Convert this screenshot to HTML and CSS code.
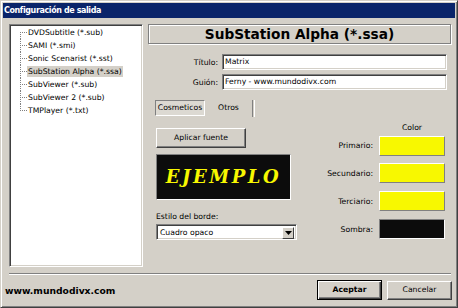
FILE: index.html
```html
<!DOCTYPE html>
<html lang="es">
<head>
  <meta charset="UTF-8">
  <title>Configuración de salida</title>
  <link rel="stylesheet" href="styles.css">
</head>
<body>
  <div class="window">
    <div class="titlebar">Configuración de salida</div>

    <div class="main">
      <div class="tree">
        <ul>
          <li><span>DVDSubtitle (*.sub)</span></li>
          <li><span>SAMI (*.smi)</span></li>
          <li><span>Sonic Scenarist (*.sst)</span></li>
          <li class="selected"><span>SubStation Alpha (*.ssa)</span></li>
          <li><span>SubViewer (*.sub)</span></li>
          <li><span>SubViewer 2 (*.sub)</span></li>
          <li><span>TMPlayer (*.txt)</span></li>
        </ul>
      </div>

      <div class="panel">
        <div class="heading">SubStation Alpha (*.ssa)</div>

        <div class="field">
          <label>Título:</label>
          <div class="input">Matrix</div>
        </div>
        <div class="field">
          <label>Guión:</label>
          <div class="input">Ferny - www.mundodivx.com</div>
        </div>

        <div class="tabs">
          <span class="tab active">Cosmeticos</span>
          <span class="tab">Otros</span>
          <span class="tab-sep"></span>
        </div>

        <div class="cosmetic">
          <div class="font-col">
            <div class="btn apply">Aplicar fuente</div>
            <div class="sample">EJEMPLO</div>
            <div class="caption">Estilo del borde:</div>
            <div class="select">
              <span class="select-text">Cuadro opaco</span>
              <span class="arrow">
                <svg width="7" height="4" viewBox="0 0 7 4"><path d="M0 0h7L3.5 4z" fill="#000"/></svg>
              </span>
            </div>
          </div>

          <div class="color-col">
            <div class="color-head">Color</div>
            <span class="color-label">Primario:</span><span class="swatch yellow"></span>
            <span class="color-label">Secundario:</span><span class="swatch yellow"></span>
            <span class="color-label">Terciario:</span><span class="swatch yellow"></span>
            <span class="color-label">Sombra:</span><span class="swatch black"></span>
          </div>
        </div>
      </div>
    </div>

    <div class="separator"></div>

    <div class="footer">
      <span class="site">www.mundodivx.com</span>
      <div class="btn default">Aceptar</div>
      <div class="btn">Cancelar</div>
    </div>
  </div>
</body>
</html>
```

FILE: styles.css
```css
body {
  margin: 0;
  background: #d4d0c8;
  font-family: "DejaVu Sans", sans-serif;
  font-size: 7.7px;
  color: #000;
}
.window {
  width: 458px;
  height: 308px;
  box-sizing: border-box;
  border: 1px solid;
  border-color: #d4d0c8 #404040 #404040 #d4d0c8;
  box-shadow: inset 1px 1px #fff, inset -1px -1px #808080;
  padding: 2px;
  background: #d4d0c8;
  display: flex;
  flex-direction: column;
}
.titlebar {
  height: 15px;
  line-height: 15px;
  padding-left: 1px;
  background: #0a246a;
  color: #fff;
  font-weight: bold;
  font-size: 8px;
  letter-spacing: -0.4px;
}
.main {
  display: flex;
  gap: 5px;
  padding: 6px 4px 0 6px;
}

/* tree */
.tree {
  width: 134px;
  height: 243px;
  box-sizing: border-box;
  background: #fff;
  border: 1px solid;
  border-color: #808080 #fff #fff #808080;
  box-shadow: inset 1px 1px #404040, inset -1px -1px #d4d0c8;
}
.tree ul {
  list-style: none;
  margin: 0;
  padding: 1px 0 0 10px;
}
.tree li {
  position: relative;
  height: 13px;
  line-height: 13px;
  padding-left: 7px;
  white-space: nowrap;
}
.tree li::before {
  content: "";
  position: absolute;
  left: 0;
  top: 0;
  width: 1px;
  height: 13px;
  background: repeating-linear-gradient(to bottom, #808080 0 1px, transparent 1px 2px);
}
.tree li:first-child::before {
  top: 6px;
  height: 7px;
}
.tree li:last-child::before {
  height: 7px;
}
.tree li::after {
  content: "";
  position: absolute;
  left: 1px;
  top: 6px;
  width: 6px;
  height: 1px;
  background: repeating-linear-gradient(to right, transparent 0 1px, #808080 1px 2px);
}
.tree li span {
  padding: 1px 1px;
}
.tree li.selected span {
  background: #d4d0c8;
}

/* right panel */
.panel {
  flex: 1;
  display: flex;
  flex-direction: column;
}
.heading {
  height: 20px;
  box-sizing: border-box;
  border: 1px solid #808080;
  box-shadow: inset 1px 1px #fff, 1px 1px #fff;
  text-align: center;
  font-weight: bold;
  font-size: 13.7px;
  line-height: 18px;
}
.field {
  display: flex;
  align-items: center;
  margin-top: 4px;
}
.heading + .field {
  margin-top: 10px;
}
.field label {
  flex: 0 0 70px;
  text-align: right;
  margin-right: 4px;
}
.input {
  flex: 1;
  margin-right: 4px;
  height: 16px;
  box-sizing: border-box;
  background: #fff;
  border: 1px solid;
  border-color: #808080 #fff #fff #808080;
  box-shadow: inset 1px 1px #404040, inset -1px -1px #d4d0c8;
  padding-left: 2px;
  line-height: 14px;
  white-space: nowrap;
}

.tabs {
  display: flex;
  align-items: center;
  height: 18px;
  margin-top: 9px;
}
.tab {
  width: 47px;
  text-align: center;
  line-height: 16px;
}
.tab.active {
  width: 50px;
  height: 16px;
  box-sizing: border-box;
  margin-left: 7px;
  border: 1px solid;
  border-color: #808080 #fff #fff #808080;
  background: #dcd9d2;
  line-height: 14px;
}
.tab-sep {
  width: 1px;
  height: 17px;
  border-left: 1px solid #808080;
  border-right: 1px solid #fff;
}

.cosmetic {
  display: flex;
  justify-content: space-between;
}
.font-col {
  width: 141px;
  margin-left: 8px;
}
.btn {
  box-sizing: border-box;
  background: #d4d0c8;
  border: 1px solid;
  border-color: #fff #404040 #404040 #fff;
  box-shadow: inset -1px -1px #808080;
  text-align: center;
}
.apply {
  width: 90px;
  height: 20px;
  line-height: 17px;
  margin-top: 11px;
}
.sample {
  width: 135px;
  height: 46px;
  margin-top: 6px;
  box-sizing: border-box;
  background: #0c0c0c;
  border: 1px solid;
  border-color: #808080 #fff #fff #808080;
  color: #f8f800;
  font-family: "DejaVu Serif", serif;
  font-weight: bold;
  font-style: italic;
  font-size: 18px;
  letter-spacing: 2.5px;
  text-align: center;
  line-height: 43px;
}
.caption {
  margin-top: 11px;
  line-height: 11px;
}
.select {
  display: flex;
  margin-top: 2px;
  width: 141px;
  height: 16px;
  box-sizing: border-box;
  background: #fff;
  border: 1px solid;
  border-color: #808080 #fff #fff #808080;
  box-shadow: inset 1px 1px #404040, inset -1px -1px #d4d0c8;
  padding: 2px;
}
.select-text {
  flex: 1;
  line-height: 12px;
  padding-left: 1px;
}
.arrow {
  width: 12px;
  height: 12px;
  box-sizing: border-box;
  background: #d4d0c8;
  border: 1px solid;
  border-color: #fff #404040 #404040 #fff;
  display: flex;
  align-items: center;
  justify-content: center;
}

.color-col {
  display: grid;
  grid-template-columns: auto 66px;
  column-gap: 6px;
  row-gap: 6px;
  align-items: center;
  margin-right: 6px;
  margin-top: 4px;
}
.color-head {
  grid-column: 2;
  text-align: center;
  line-height: 11px;
  margin-bottom: -5px;
}
.color-label {
  text-align: right;
}
.swatch {
  height: 20px;
  box-sizing: border-box;
  border: 1px solid;
  border-color: #fff #808080 #808080 #fff;
}
.swatch.yellow {
  background: #f8f800;
}
.swatch.black {
  background: #0c0c0c;
  border-color: #808080 #fff #fff #808080;
}

.separator {
  margin: 6px 4px 0 6px;
  border-top: 1px solid #808080;
  border-bottom: 1px solid #fff;
}
.footer {
  display: flex;
  align-items: center;
  gap: 5px;
  padding: 5px 3px 0 2px;
}
.site {
  flex: 1;
  font-weight: bold;
  font-size: 9.2px;
}
.footer .btn {
  width: 65px;
  height: 19px;
  line-height: 16px;
}
.footer .btn.default {
  height: 20px;
  border: 1px solid #000;
  box-shadow: inset 1px 1px #fff, inset -1px -1px #404040, inset -2px -2px #808080;
  font-weight: bold;
  line-height: 18px;
}
```
